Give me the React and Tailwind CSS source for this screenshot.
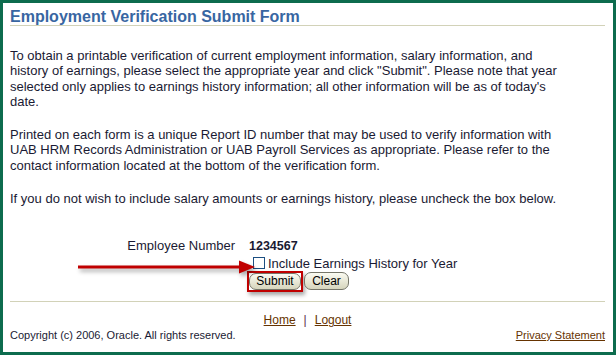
export default function App() {
  const font = { fontFamily: '"Liberation Sans", Arial, sans-serif' };
  return (
    <div
      style={font}
      className="relative w-[616px] h-[355px] box-border border-[3px] border-[#0d6c4e] bg-white pl-[7px] pr-[8px] pt-[6px] text-[#1a1a33] overflow-hidden"
    >
      <div className="text-[16px] leading-[16px] font-bold text-[#3866a2] border-b border-[#d2d2b8] whitespace-nowrap">
        Employment Verification Submit Form
      </div>

      <div className="text-[13px] leading-[15.3px] whitespace-nowrap">
        <p className="mt-[22px]">
          To obtain a printable verification of current employment information, salary information, and
          <br />
          history of earnings, please select the appropriate year and click "Submit". Please note that year
          <br />
          selected only applies to earnings history information; all other information will be as of today's
          <br />
          date.
        </p>
        <p className="mt-[18px]">
          Printed on each form is a unique Report ID number that may be used to verify information with
          <br />
          UAB HRM Records Administration or UAB Payroll Services as appropriate. Please refer to the
          <br />
          contact information located at the bottom of the verification form.
        </p>
        <p className="mt-[18px]">
          If you do not wish to include salary amounts or earnings history, please uncheck the box below.
        </p>
      </div>

      <div className="mt-[32px] text-[13px]">
        <div className="flex leading-[16px]">
          <div className="w-[225px] text-right">Employee Number</div>
          <div className="ml-[14px] font-bold text-[12.5px]">1234567</div>
        </div>
        <div className="flex leading-[16px] mt-[2px]">
          <div className="w-[225px]" />
          <div className="ml-[14px] flex items-start">
            <span className="mt-[1px] ml-[4px] w-[12px] h-[12px] border border-[#1c4f82] bg-white box-border" />
            <span className="ml-[3px] whitespace-nowrap">Include Earnings History for Year</span>
          </div>
        </div>
        <div className="flex mt-[-1px]">
          <div className="w-[225px]" />
          <div className="ml-[12px] flex items-start">
            <div className="border-2 border-[#c00000] shadow-[2px_3px_4px_rgba(0,0,0,0.35)]">
              <button className="block w-[52px] h-[17px] rounded-[7px] border border-[#76766a] bg-gradient-to-b from-[#fbfbf2] to-[#d6d5bd] text-[12px] leading-[15px] text-black">
                Submit
              </button>
            </div>
            <button className="ml-[1px] mt-[1px] w-[45px] h-[18px] rounded-[7px] border border-[#76766a] bg-gradient-to-b from-[#fbfbf2] to-[#d6d5bd] text-[12px] leading-[16px] text-black">
              Clear
            </button>
          </div>
        </div>
      </div>

      <div className="mt-[9px] border-t border-[#d2d2b8]" />

      <div className="mt-[10px] flex justify-center text-[12px] leading-[16px]">
        <span className="underline text-[#663300]">Home</span>
        <span className="mx-[8px] text-[#5a2a4a]">|</span>
        <span className="underline text-[#663300]">Logout</span>
      </div>
      <div className="flex justify-between text-[11px] leading-[14px]">
        <span>Copyright (c) 2006, Oracle. All rights reserved.</span>
        <span className="underline text-[#663300]">Privacy Statement</span>
      </div>

      <svg
        className="absolute left-[70px] top-[254px]"
        width="190"
        height="22"
        viewBox="0 0 190 22"
        style={{ filter: 'drop-shadow(2px 3px 2px rgba(0,0,0,0.35))' }}
      >
        <rect x="5" y="8.5" width="164" height="3" fill="#c00000" />
        <polygon points="166,3.5 182,10 166,16.5" fill="#c00000" />
      </svg>
    </div>
  );
}
